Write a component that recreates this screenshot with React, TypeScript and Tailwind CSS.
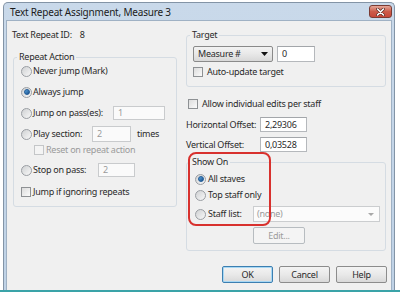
import React from 'react';

function Radio({ checked }: { checked?: boolean }) {
  return (
    <span className="w-[11px] h-[11px] rounded-full border border-[#9a9ea3] bg-gradient-to-br from-[#cfd1d3] to-[#f8f8f8] flex items-center justify-center shrink-0">
      {checked && <span className="w-[6px] h-[6px] rounded-full bg-gradient-to-br from-[#5aa6e0] to-[#1a4f8a] border border-[#1f5a96]" />}
    </span>
  );
}

function Check({ disabled }: { disabled?: boolean }) {
  return (
    <span
      className={
        disabled
          ? 'w-[10px] h-[10px] border border-[#c4c6c8] bg-[#f4f4f4] shrink-0'
          : 'w-[10px] h-[10px] border border-[#8e9194] bg-gradient-to-br from-[#dcdcdc] to-[#fbfbfb] shrink-0'
      }
    />
  );
}

function Field({ value, w, disabled, h = 'h-[15px]' }: { value: string; w: string; disabled?: boolean; h?: string }) {
  return (
    <span
      className={`${w} ${h} border flex items-center pl-[4px] shrink-0 ${
        disabled ? 'bg-[#fafafa] border-[#c9cbcd] text-[#9a9a9a]' : 'bg-white border-[#b5b8bc] border-t-[#a3a6aa] text-[#2a2a2a]'
      }`}
    >
      {value}
    </span>
  );
}

function Button({ label, primary, disabled, w = 'w-[51px]' }: { label: string; primary?: boolean; disabled?: boolean; w?: string }) {
  if (disabled) {
    return (
      <span className={`${w} h-[17px] rounded-[2px] border border-[#b7bcc0] bg-[#f4f4f4] text-[#9c9c9c] flex items-center justify-center`}>
        {label}
      </span>
    );
  }
  return (
    <span
      className={`${w} h-[17px] rounded-[2px] border flex items-center justify-center text-[#2a2a2a] bg-gradient-to-b from-[#f4f4f4] via-[#e9e9e9] to-[#d9d9d9] ${
        primary ? 'border-[#3c7fb1] shadow-[inset_0_0_0_1px_#a8d8f4]' : 'border-[#8c8c8c]'
      }`}
    >
      {label}
    </span>
  );
}

export default function App() {
  return (
    <div className="relative w-[400px] h-[292px] bg-white flex flex-col overflow-hidden whitespace-nowrap font-['Noto_Sans',sans-serif] text-[9px] leading-[14px] tracking-[-0.25px] text-[#2a2a2a]">
      <div className="flex-1 flex pl-[3px] pr-[5px] pt-[2px] min-h-0">
        <div className="flex-1 flex flex-col bg-gradient-to-b from-[#c9d9ea] to-[#bfd2e6] border border-[#8394a6] border-b-0 rounded-t-[5px] px-[2px]">
          <div className="h-[17px] flex items-center justify-between pl-[4px]">
            <span className="text-[10px] tracking-[-0.2px] text-[#1b1b1b]">Text Repeat Assignment, Measure 3</span>
            <span className="w-[23px] h-[13px] rounded-[3px] border border-[#7a3b33] bg-gradient-to-b from-[#e3a79a] via-[#cc5b4a] to-[#c8473a] flex items-center justify-center">
              <svg width="9" height="8" viewBox="0 0 9 8">
                <path d="M1.5 1 L7.5 7 M7.5 1 L1.5 7" stroke="#5a2a24" strokeWidth="3" strokeLinecap="round" />
                <path d="M1.5 1 L7.5 7 M7.5 1 L1.5 7" stroke="#ffffff" strokeWidth="1.6" strokeLinecap="round" />
              </svg>
            </span>
          </div>
          <div className="flex-1 bg-[#f0f0f0] border border-[#9fb1c4] border-b-0 flex flex-col pt-[7px] pr-[4px]">
            <div className="flex">
              {/* left column */}
              <div className="w-[165px] ml-[5px] flex flex-col">
                <div className="h-[14px] flex items-center">
                  <span>Text Repeat ID:</span>
                  <span className="ml-[8px]">8</span>
                </div>
                <fieldset className="mt-[8px] ml-[1px] border border-[#d5dce3] rounded-[3px]">
                  <legend className="ml-[3px] px-[2px] leading-[14px]">Repeat Action</legend>
                  <div className="pb-[7px] pl-[7px]">
                    <div className="h-[14px] flex items-center">
                      <Radio />
                      <span className="ml-[1px]">Never jump (Mark)</span>
                    </div>
                    <div className="mt-[7px] h-[14px] flex items-center">
                      <Radio checked />
                      <span className="ml-[1px]">Always jump</span>
                    </div>
                    <div className="mt-[7px] h-[14px] flex items-center">
                      <Radio />
                      <span className="ml-[1px] w-[80px]">Jump on pass(es):</span>
                      <Field value="1" w="w-[52px]" h="h-[14px]" disabled />
                    </div>
                    <div className="mt-[6px] h-[16px] flex items-center">
                      <Radio />
                      <span className="ml-[1px] w-[59px]">Play section:</span>
                      <Field value="2" w="w-[39px]" h="h-[16px]" disabled />
                      <span className="ml-[6px]">times</span>
                    </div>
                    <div className="h-[16px] flex items-center pl-[13px]">
                      <Check disabled />
                      <span className="ml-[2px] text-[#9a9a9a]">Reset on repeat action</span>
                    </div>
                    <div className="mt-[5px] h-[14px] flex items-center">
                      <Radio />
                      <span className="ml-[1px] w-[65px]">Stop on pass:</span>
                      <Field value="2" w="w-[37px]" h="h-[14px]" disabled />
                    </div>
                    <div className="mt-[8px] h-[14px] flex items-center">
                      <Check />
                      <span className="ml-[2px]">Jump if ignoring repeats</span>
                    </div>
                  </div>
                </fieldset>
              </div>

              {/* right column */}
              <div className="w-[200px] ml-[9px] flex flex-col">
                <fieldset className="border border-[#d5dce3] rounded-[3px]">
                  <legend className="ml-[3px] px-[2px] leading-[14px]">Target</legend>
                  <div className="pb-[7px] pl-[6px]">
                    <div className="mt-[4px] h-[16px] flex items-center">
                      <span className="w-[80px] h-[16px] rounded-[2px] border border-[#8a8a8a] bg-gradient-to-b from-[#f3f3f3] via-[#e8e8e8] to-[#d8d8d8] flex items-center justify-between pl-[4px] pr-[4px]">
                        <span>Measure #</span>
                        <svg width="7" height="4" viewBox="0 0 7 4">
                          <path d="M0 0 L7 0 L3.5 4 Z" fill="#111" />
                        </svg>
                      </span>
                      <span className="ml-[4px]">
                        <Field value="0" w="w-[38px]" h="h-[16px]" />
                      </span>
                    </div>
                    <div className="mt-[3px] h-[14px] flex items-center">
                      <Check />
                      <span className="ml-[4px]">Auto-update target</span>
                    </div>
                  </div>
                </fieldset>
                <div className="mt-[10px] h-[14px] flex items-center ml-[2px]">
                  <Check />
                  <span className="ml-[4px]">Allow individual edits per staff</span>
                </div>
                <div className="mt-[6px] h-[15px] flex items-center">
                  <span className="w-[74px]">Horizontal Offset:</span>
                  <Field value="2,29306" w="w-[47px]" />
                </div>
                <div className="mt-[5px] h-[15px] flex items-center">
                  <span className="w-[74px]">Vertical Offset:</span>
                  <Field value="0,03528" w="w-[47px]" />
                </div>
                <fieldset className="mt-[3px] border border-[#d5dce3] rounded-[3px]">
                  <legend className="ml-[3px] px-[2px] leading-[14px]">Show On</legend>
                  <div className="pb-[6px] pl-[8px]">
                    <div className="mt-[3px] h-[14px] flex items-center">
                      <Radio checked />
                      <span className="ml-[2px]">All staves</span>
                    </div>
                    <div className="mt-[2px] h-[14px] flex items-center">
                      <Radio />
                      <span className="ml-[2px]">Top staff only</span>
                    </div>
                    <div className="mt-[4px] h-[16px] flex items-center">
                      <Radio />
                      <span className="ml-[2px] w-[45px]">Staff list:</span>
                      <span className="w-[127px] h-[16px] border border-[#cbcdcf] bg-[#fbfbfb] flex items-center justify-between pl-[3px] pr-[5px] text-[#9a9a9a]">
                        <span>(none)</span>
                        <svg width="6" height="3" viewBox="0 0 6 3">
                          <path d="M0 0 L6 0 L3 3 Z" fill="#a8a8a8" />
                        </svg>
                      </span>
                    </div>
                    <div className="mt-[5px] pl-[58px]">
                      <Button label="Edit..." disabled w="w-[52px]" />
                    </div>
                  </div>
                </fieldset>
              </div>
            </div>

            <div className="mt-[15px] flex justify-end gap-[6px]">
              <Button label="OK" primary />
              <Button label="Cancel" />
              <Button label="Help" />
            </div>
          </div>
        </div>
      </div>
      <div className="h-[2px] bg-[#3aa3a8]" />

      {/* red annotation */}
      <div className="absolute left-[188px] top-[152px] w-[83px] h-[74px] rounded-[8px] border-2 border-[#d8312e]" />
    </div>
  );
}
